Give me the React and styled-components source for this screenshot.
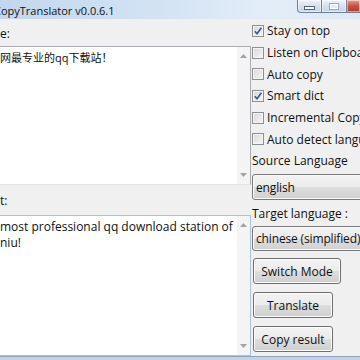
import React from "react"
import styled, { createGlobalStyle } from "styled-components"

const GlobalStyle = createGlobalStyle`
  html, body {
    margin: 0;
    width: 360px;
    height: 360px;
    overflow: hidden;
    background: #f0f0f0;
  }
  body {
    font-family: "Open Sans", "Noto Sans CJK SC", sans-serif;
    color: #111;
  }
`

const options = [
  { id: 0, label: "Stay on top", checked: true },
  { id: 1, label: "Listen on Clipboard", checked: false },
  { id: 2, label: "Auto copy", checked: false },
  { id: 3, label: "Smart dict", checked: true },
  { id: 4, label: "Incremental Copy", checked: false },
  { id: 5, label: "Auto detect language", checked: false },
]

const Arrow = ({ up }) => (
  <svg width="7" height="4" viewBox="0 0 7 4">
    <path d={up ? "M0 4 L3.5 0 L7 4 Z" : "M0 0 L3.5 4 L7 0 Z"} fill="#a3a3a3" />
  </svg>
)

const Check = () => (
  <svg width="10" height="10" viewBox="0 0 10 10">
    <path
      d="M1.8 5.2 L4 7.8 L8.4 1.8"
      fill="none"
      stroke="#3a5796"
      strokeWidth="1.6"
      strokeLinejoin="round"
    />
  </svg>
)

const App = () => {
  return (
    <>
      <GlobalStyle />
      <Window>
        <TitleBar>
          <Title>CopyTranslator v0.0.6.1</Title>
          <Controls>
            <CtrlButton $kind="min">
              <MinGlyph />
            </CtrlButton>
            <CtrlButton $kind="max">
              <MaxGlyph />
            </CtrlButton>
            <CtrlButton $kind="close" />
          </Controls>
        </TitleBar>
        <Body>
          <LeftPane>
            <PaneLabel $h={26}>e:</PaneLabel>
            <TextBox $h={139} $border="#abadb3" $bottom="#e3e3e3">
              <TextContent $size={11} $pad={2.5}>
                网最专业的qq下载站！
              </TextContent>
              <ScrollTrack>
                <Arrow up />
                <Arrow />
              </ScrollTrack>
            </TextBox>
            <PaneLabel $h={30}>t:</PaneLabel>
            <TextBox $h={141} $border="#a6c5e6" $bottom="#a6c5e6">
              <TextContent $size={12} $pad={3}>
                most professional qq download station of
                <br />
                niu!
              </TextContent>
              <ScrollTrack>
                <Arrow up />
                <Arrow />
              </ScrollTrack>
            </TextBox>
          </LeftPane>
          <RightPane>
            {options.map(opt => (
              <CheckRow key={opt.id}>
                <CheckBox>{opt.checked && <Check />}</CheckBox>
                <span>{opt.label}</span>
              </CheckRow>
            ))}
            <FieldLabel>Source Language</FieldLabel>
            <Select $h={26} $top={2}>english</Select>
            <FieldLabel $top={3}>Target language :</FieldLabel>
            <Select $h={25} $top={1}>chinese (simplified)</Select>
            <Button $w={88} $top={7}>Switch Mode</Button>
            <Button $w={80} $top={8}>Translate</Button>
            <Button $w={80} $top={8}>Copy result</Button>
          </RightPane>
        </Body>
        <BottomFrame />
      </Window>
    </>
  )
}

const Window = styled.div`
  width: 360px;
  height: 360px;
  display: flex;
  flex-direction: column;
  overflow: hidden;
  background: #f0f0f0;
`

const TitleBar = styled.div`
  height: 20px;
  flex: none;
  display: flex;
  align-items: center;
  background: linear-gradient(to right, #c2d7ee 0%, #d3e3f4 45%, #e3edf8 75%, #dce8f5 100%);
  box-shadow: inset 0 -1px 0 #e9f0f8;
`

const Title = styled.div`
  font-size: 11px;
  margin-left: -6px;
  padding-top: 1px;
  color: #111;
  white-space: nowrap;
  line-height: 20px;
`

const Controls = styled.div`
  margin-left: auto;
  align-self: flex-start;
  display: flex;
  height: 13px;
`

const CtrlButton = styled.div`
  box-sizing: border-box;
  height: 13px;
  width: ${p => (p.$kind === "close" ? 14 : 25)}px;
  margin-right: ${p => (p.$kind === "close" ? -1 : 0)}px;
  display: flex;
  align-items: center;
  justify-content: center;
  border: 1px solid #6f8196;
  border-top: none;
  border-left: ${p => (p.$kind === "min" ? "1px solid #6f8196" : "none")};
  border-bottom-left-radius: ${p => (p.$kind === "min" ? 4 : 0)}px;
  background: ${p =>
    p.$kind === "close"
      ? "linear-gradient(#e0a196, #c8503f 50%, #b8382a)"
      : "linear-gradient(#eef3f9, #d6e1ee 50%, #c5d3e3)"};
  box-shadow: inset 0 0 0 1px rgba(255, 255, 255, 0.5);
`

const MinGlyph = styled.div`
  width: 9px;
  height: 2px;
  margin-top: 4px;
  background: #fff;
  border: 1px solid #55667a;
`

const MaxGlyph = styled.div`
  width: 8px;
  height: 5px;
  border: 1px solid #9aa9ba;
  box-shadow: inset 0 0 0 1px #fff;
  background: #e5ecf4;
`

const Body = styled.div`
  flex: 1;
  display: flex;
  min-height: 0;
`

const LeftPane = styled.div`
  width: 251px;
  flex: none;
  display: flex;
  flex-direction: column;
`

const PaneLabel = styled.div`
  height: ${p => p.$h}px;
  display: flex;
  align-items: center;
  font-size: 12px;
  padding-top: 1px;
  box-sizing: border-box;
`

const TextBox = styled.div`
  box-sizing: border-box;
  height: ${p => p.$h}px;
  display: flex;
  border-top: 1px solid ${p => p.$border};
  border-right: 1px solid ${p => p.$border};
  border-bottom: 1px solid ${p => p.$bottom};
  background: #fff;
`

const TextContent = styled.div`
  flex: 1;
  padding-top: ${p => p.$pad}px;
  font-size: ${p => p.$size}px;
  line-height: 16px;
  white-space: nowrap;
  overflow: hidden;
  color: #111;
`

const ScrollTrack = styled.div`
  width: 13px;
  flex: none;
  background: #f4f4f4;
  display: flex;
  flex-direction: column;
  align-items: center;
  justify-content: space-between;
  padding: 7px 0 7px;
`

const RightPane = styled.div`
  flex: 1;
  min-width: 0;
  overflow: hidden;
  padding-left: 1px;
  display: flex;
  flex-direction: column;
  font-size: 12px;
`

const CheckRow = styled.div`
  height: 21.7px;
  flex: none;
  display: flex;
  align-items: center;
  gap: 3px;
  white-space: nowrap;
`

const CheckBox = styled.div`
  box-sizing: border-box;
  width: 12px;
  height: 12px;
  flex: none;
  border: 1px solid #8e8f8f;
  background: linear-gradient(135deg, #d8d8d8, #f6f6f6);
  box-shadow: inset 0 0 0 1px #f4f4f4;
  display: flex;
  align-items: center;
  justify-content: center;
`

const FieldLabel = styled.div`
  height: 22px;
  flex: none;
  line-height: 22px;
  margin-top: ${p => p.$top || 0}px;
  white-space: nowrap;
`

const Select = styled.div`
  box-sizing: border-box;
  height: ${p => p.$h}px;
  flex: none;
  width: 130px;
  margin-top: ${p => p.$top}px;
  padding-left: 3px;
  display: flex;
  align-items: center;
  white-space: nowrap;
  letter-spacing: -0.15px;
  border: 1px solid #7a7a7a;
  border-radius: 3px;
  background: linear-gradient(#f3f3f3, #ebebeb 50%, #dddddd 51%, #d1d1d1);
  box-shadow: inset 0 0 0 1px #fafafa;
`

const Button = styled.div`
  box-sizing: border-box;
  height: 26px;
  flex: none;
  width: ${p => p.$w}px;
  margin-top: ${p => p.$top}px;
  margin-left: 1px;
  display: flex;
  align-items: center;
  justify-content: center;
  white-space: nowrap;
  border: 1px solid #707070;
  border-radius: 3px;
  background: linear-gradient(#f3f3f3, #ebebeb 50%, #dddddd 51%, #cfcfcf);
  box-shadow: inset 0 0 0 1px #fbfbfb;
`

const BottomFrame = styled.div`
  height: 4px;
  flex: none;
  border-top: 1px solid #8fa3ba;
  background: #c0d3e8;
  box-sizing: border-box;
`

export default App
